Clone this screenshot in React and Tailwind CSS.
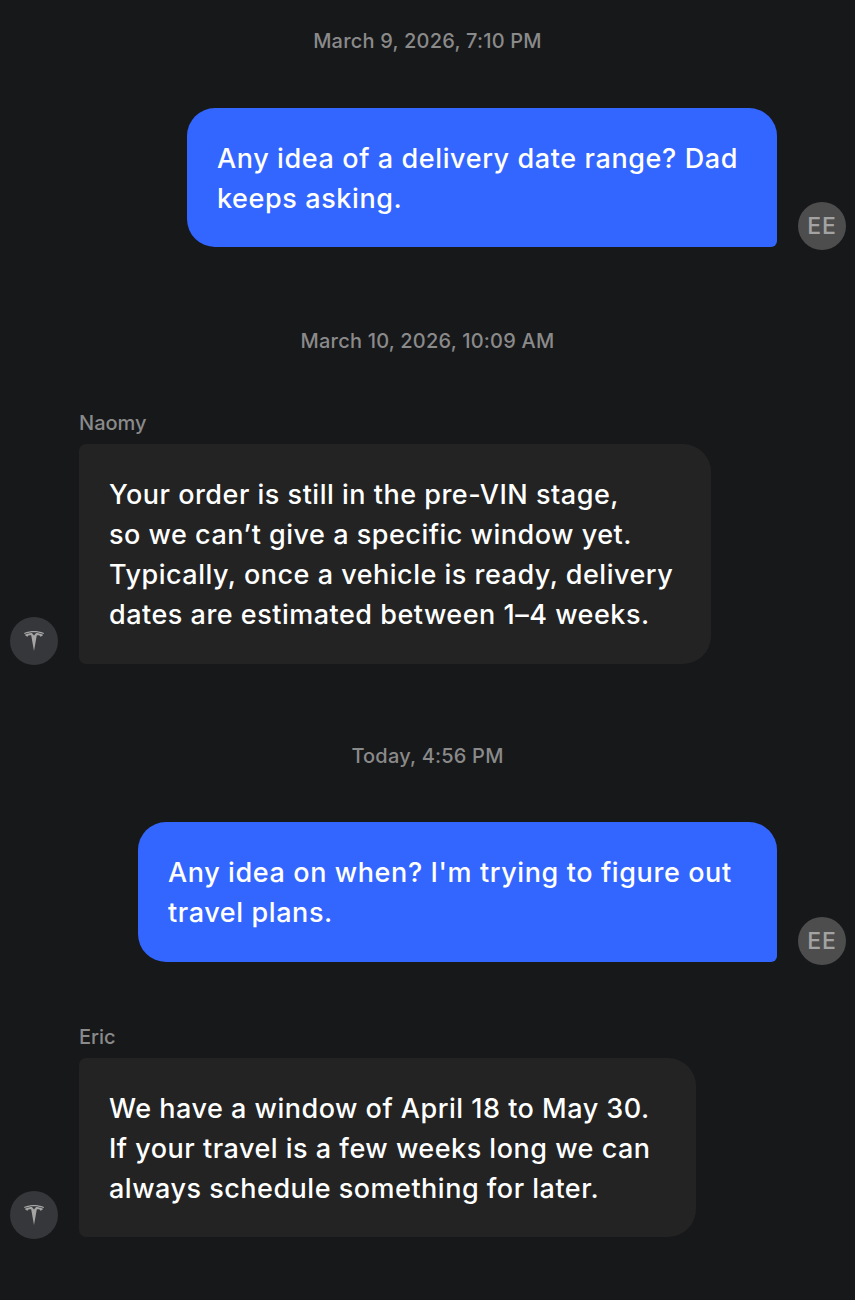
import React from 'react';
import { SiTesla } from 'react-icons/si';

const DateRow = ({ children, className }) => (
  <div className={`text-center text-[20px] leading-[28px] font-medium tracking-[0.2px] text-[#8a8a8a] ${className}`}>{children}</div>
);

const MeAvatar = () => (
  <div className="w-12 h-12 shrink-0 rounded-full bg-[#4d4d4d] text-[#a3a3a3] text-[23px] font-medium tracking-[1px] flex items-center justify-center mb-[-3px]">
    EE
  </div>
);

const TeslaAvatar = ({ offset }) => (
  <div className={`w-12 h-12 shrink-0 rounded-full bg-[#36373a] text-[#a5a5a5] flex items-center justify-center ${offset}`}>
    <SiTesla size={20} />
  </div>
);

const Outgoing = ({ width, pad, children }) => (
  <div className="flex justify-end items-end gap-[21px] pr-[9px]">
    <div className={`${width} ${pad} bg-[#3366ff] rounded-[28px] rounded-br-[6px] pt-[31px] text-[27px] leading-[40px] font-[550] tracking-[0.6px] text-white whitespace-nowrap`}>
      {children}
    </div>
    <MeAvatar />
  </div>
);

const Incoming = ({ name, width, pad, offset, children }) => (
  <div className="flex items-end gap-[21px] pl-[10px]">
    <TeslaAvatar offset={offset} />
    <div className="flex flex-col">
      <div className="text-[20px] leading-[28px] font-medium text-[#8a8a8a] mb-[7px]">{name}</div>
      <div className={`${width} ${pad} bg-[#232323] rounded-[28px] rounded-tl-[7px] rounded-bl-[7px] pl-[30px] pt-[31px] text-[27px] leading-[40px] font-[550] tracking-[0.5px] text-white whitespace-nowrap`}>
        {children}
      </div>
    </div>
  </div>
);

export default function App() {
  return (
    <div className="w-[855px] h-[1300px] overflow-hidden bg-[#17181a] flex flex-col pt-[27px] font-['Inter',sans-serif]">
      <DateRow className="mb-[53px]">March 9, 2026, 7:10 PM</DateRow>
      <Outgoing width="w-[590px]" pad="pl-[30px] pb-[28px]">
        Any idea of a delivery date range? Dad<br />keeps asking.
      </Outgoing>
      <DateRow className="mt-[80px] mb-[54px]">March 10, 2026, 10:09 AM</DateRow>
      <Incoming name="Naomy" width="w-[632px]" pad="pb-[29px]" offset="mb-[-1px]">
        Your order is still in the pre-VIN stage,<br />
        so we can’t give a specific window yet.<br />
        Typically, once a vehicle is ready, delivery<br />
        dates are estimated between 1–4 weeks.
      </Incoming>
      <DateRow className="mt-[78px] mb-[52px]">Today, 4:56 PM</DateRow>
      <Outgoing width="w-[639px]" pad="pl-[30px] pb-[29px]">
        Any idea on when? I'm trying to figure out<br />travel plans.
      </Outgoing>
      <div className="h-[61px]" />
      <Incoming name="Eric" width="w-[617px]" pad="pb-[28px]" offset="mb-[-2px]">
        We have a window of April 18 to May 30.<br />
        If your travel is a few weeks long we can<br />
        always schedule something for later.
      </Incoming>
    </div>
  );
}
